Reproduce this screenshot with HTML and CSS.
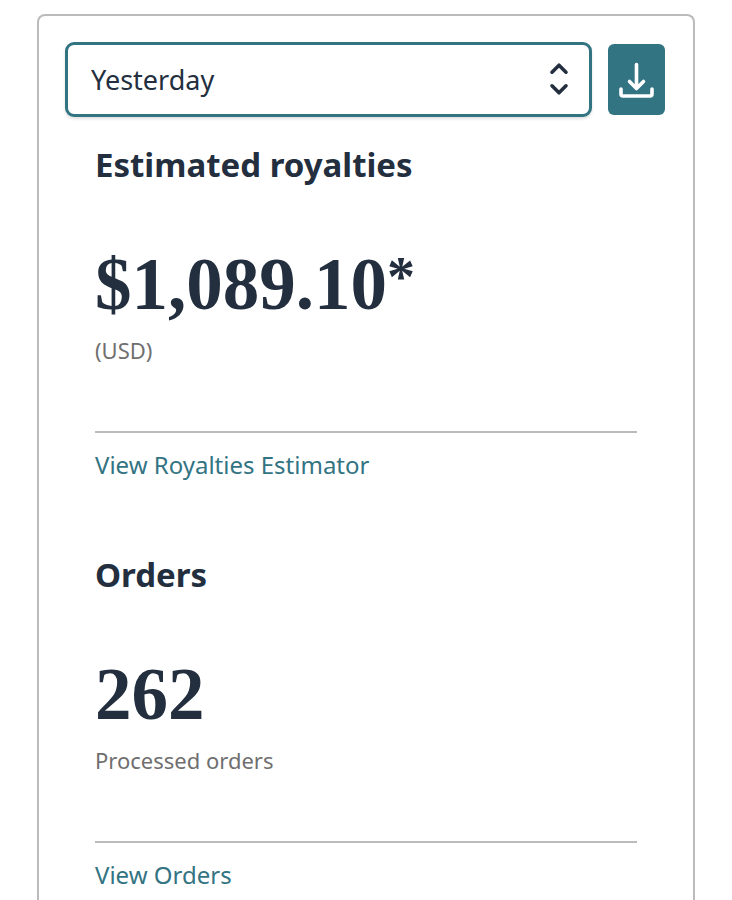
FILE: index.html
```html
<!DOCTYPE html>
<html lang="en">
<head>
    <meta charset="UTF-8">
    <meta name="viewport" content="width=device-width, initial-scale=1.0">
    <title>Royalties Dashboard</title>
    <link rel="stylesheet" href="styles.css">
</head>
<body>

    <main class="card">
        <div class="toolbar">
            <div class="period">
                <select class="period-select" aria-label="Reporting period">
                    <option>Today</option>
                    <option selected>Yesterday</option>
                    <option>This month</option>
                </select>
                <svg class="period-arrows" viewBox="0 0 20 34" aria-hidden="true">
                    <path d="M3 10.2 10 3.2l7 7M3 23.8l7 7 7-7"/>
                </svg>
            </div>
            <button class="download" type="button" aria-label="Download report">
                <svg viewBox="0 0 36 36" aria-hidden="true">
                    <path d="M17.5 2.5v24M10.5 19.5l7 7 7-7M2 27v5q0 2 2 2h27q2 0 2-2v-5"/>
                </svg>
            </button>
        </div>

        <section class="metric">
            <h2>Estimated royalties</h2>
            <p class="value">$1,089.10<sup>*</sup></p>
            <p class="note">(USD)</p>
            <div class="metric-footer">
                <a href="#">View Royalties Estimator</a>
            </div>
        </section>

        <section class="metric">
            <h2>Orders</h2>
            <p class="value">262</p>
            <p class="note">Processed orders</p>
            <div class="metric-footer">
                <a href="#">View Orders</a>
            </div>
        </section>
    </main>

</body>
</html>
```
FILE: styles.css
```css
* {
    margin: 0;
    padding: 0;
    box-sizing: border-box;
}

body {
    display: flex;
    flex-direction: column;
    min-height: 100vh;
    font-family: "Noto Sans", "Open Sans", sans-serif;
    background-color: #fff;
    color: #232f3e;
    padding: 14px 37px 0;
}

.card {
    flex: 1;
    border: 2px solid #bbb;
    border-bottom: none;
    border-radius: 8px 8px 0 0;
    padding: 26px 28px 0 26px;
}

.toolbar {
    display: flex;
    align-items: center;
    gap: 16px;
}

.period {
    position: relative;
    flex: 1;
}

.period-select {
    display: block;
    width: 100%;
    height: 75px;
    padding: 0 60px 0 23px;
    font-family: inherit;
    font-size: 27px;
    color: inherit;
    background-color: #fff;
    border: 3px solid #337483;
    border-radius: 9px;
    box-shadow: 0 2px 3px rgba(0, 0, 0, 0.12);
    appearance: none;
}

.period-arrows {
    position: absolute;
    top: 20px;
    right: 23px;
    width: 20px;
    height: 34px;
    pointer-events: none;
}

.period-arrows path,
.download path {
    fill: none;
    stroke: #232f3e;
    stroke-width: 3.6;
    stroke-linecap: round;
    stroke-linejoin: round;
}

.download {
    display: flex;
    align-items: center;
    justify-content: center;
    width: 57px;
    height: 71px;
    background-color: #337483;
    border: none;
    border-radius: 6px;
    cursor: pointer;
}

.download svg {
    width: 36px;
    height: 36px;
}

.download path {
    stroke: #fff;
}

.metric {
    padding: 24px 28px 0 30px;
}

.metric + .metric {
    margin-top: 45px;
}

h2 {
    font-size: 33px;
    line-height: 48px;
}

.value {
    margin-top: 56px;
    font-family: "Liberation Serif", serif;
    font-size: 73px;
    font-weight: bold;
    line-height: 80px;
}

.value sup {
    font-size: 56px;
    line-height: 0;
    vertical-align: 13px;
}

.note {
    margin-top: 10px;
    font-size: 22px;
    line-height: 30px;
    color: #6f6f6f;
}

.metric-footer {
    margin-top: 66px;
    padding-top: 15px;
    border-top: 2px solid #bbb;
}

.metric-footer a {
    display: block;
    font-size: 24px;
    line-height: 34px;
    color: #337483;
    text-decoration: none;
}
```
